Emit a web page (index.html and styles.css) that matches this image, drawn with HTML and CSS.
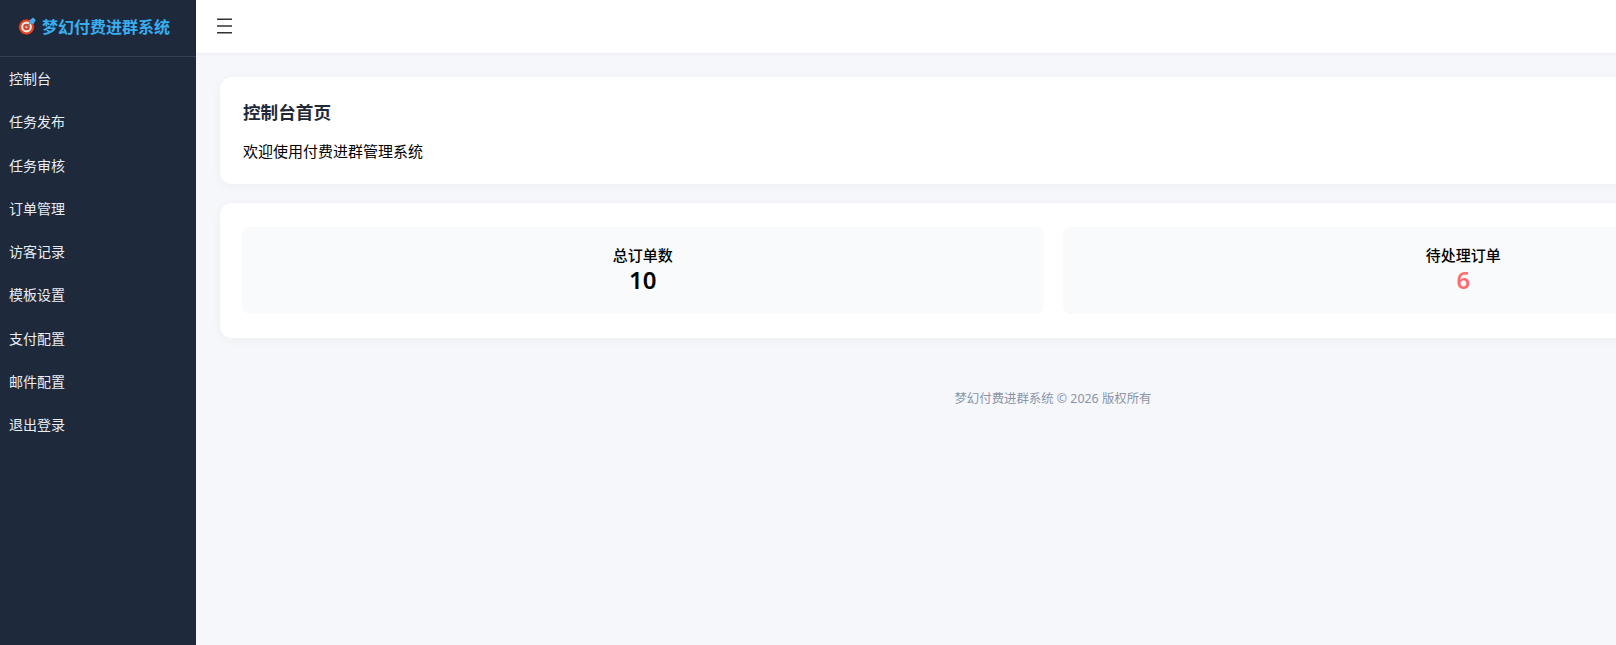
FILE: index.html
```html
<!DOCTYPE html>
<html lang="zh-CN">
<head>
<meta charset="utf-8">
<title>梦幻付费进群系统</title>
<link rel="stylesheet" href="styles.css">
</head>
<body>
<div class="layout">
  <aside class="sidebar">
    <div class="brand">
      <svg class="brand-icon" viewBox="0 0 18 18" width="18" height="18" aria-hidden="true">
        <circle cx="8.5" cy="10" r="7.9" fill="#e0452a" stroke="#3a1c1c" stroke-width=".6"/>
        <circle cx="8.5" cy="10" r="5.4" fill="#f6e9dc"/>
        <circle cx="8.5" cy="10" r="3.3" fill="#dc3f26"/>
        <circle cx="8.5" cy="10" r="1.2" fill="#f6e9dc"/>
        <path d="M8.5 10 13.5 5" stroke="#6d7c88" stroke-width="1.1"/>
        <path d="M11.5 3.5 15 .6 17.8 3 15.5 7 12.2 6.2Z" fill="#45aee8"/>
      </svg>
      <span class="brand-name">梦幻付费进群系统</span>
    </div>
    <nav class="menu">
      <a class="menu-item">控制台</a>
      <a class="menu-item">任务发布</a>
      <a class="menu-item">任务审核</a>
      <a class="menu-item">订单管理</a>
      <a class="menu-item">访客记录</a>
      <a class="menu-item">模板设置</a>
      <a class="menu-item">支付配置</a>
      <a class="menu-item">邮件配置</a>
      <a class="menu-item">退出登录</a>
    </nav>
  </aside>
  <main class="main">
    <header class="topbar">
      <svg class="burger" viewBox="0 0 15 16" width="15" height="16" aria-hidden="true">
        <path d="M0 1.3h15M0 8h15M0 14.7h15" stroke="#333" stroke-width="1.4" fill="none"/>
      </svg>
    </header>
    <div class="content">
      <section class="card intro">
        <h1 class="page-title">控制台首页</h1>
        <p class="welcome">欢迎使用付费进群管理系统</p>
      </section>
      <section class="card stats">
        <div class="stat">
          <div class="stat-label">总订单数</div>
          <div class="stat-value">10</div>
        </div>
        <div class="stat">
          <div class="stat-label">待处理订单</div>
          <div class="stat-value stat-value-alert">6</div>
        </div>
      </section>
      <footer class="footer">梦幻付费进群系统 © 2026 版权所有</footer>
    </div>
  </main>
</div>
</body>
</html>
```
FILE: styles.css
```css
* { box-sizing: border-box; }
html, body { margin: 0; padding: 0; height: 100%; overflow: hidden; }
body {
  font-family: "Noto Sans", "Noto Sans CJK SC", sans-serif;
  background: #f5f7fb;
  color: #000;
}
.layout { display: flex; width: 1910px; min-height: 645px; }
.sidebar {
  flex: 0 0 196px;
  background: #1e293b;
  color: #e8edf5;
  min-height: 645px;
}
.brand {
  display: flex;
  align-items: center;
  gap: 6px;
  height: 57px;
  padding: 0 0 4px 18px;
  border-bottom: 1px solid #334155;
}
.brand-icon { flex: none; }
.brand-name {
  font-size: 16px;
  font-weight: 700;
  color: #38aef0;
  white-space: nowrap;
}
.menu { display: flex; flex-direction: column; }
.menu-item {
  display: block;
  padding: 12px 9px;
  height: 43.3px;
  font-size: 14px;
  line-height: 19px;
  color: #e8edf5;
}
.main { flex: 0 0 1714px; display: flex; flex-direction: column; }
.topbar {
  display: flex;
  align-items: center;
  height: 53px;
  padding: 0 0 1px 21px;
  background: #fff;
  box-shadow: 0 1px 4px rgba(0, 0, 0, .05);
}
.content { padding: 24px; display: flex; flex-direction: column; gap: 19px; }
.card {
  background: #fff;
  border-radius: 12px;
  box-shadow: 0 2px 12px rgba(0, 0, 0, .04);
}
.intro { padding: 23px 24px 23px 23px; }
.page-title {
  margin: 0 0 18px;
  font-size: 17.6px;
  font-weight: 700;
  line-height: 24px;
  color: #1f2937;
}
.welcome { margin: 0; font-size: 15px; line-height: 19px; }
.stats { display: grid; grid-template-columns: 1fr 1fr; gap: 19px; padding: 24px 22px; }
.stat {
  background: #f8fafc;
  border-radius: 8px;
  height: 87px;
  padding-top: 18px;
  display: flex;
  flex-direction: column;
  align-items: center;
  text-align: center;
}
.stat-label { font-size: 15px; line-height: 20px; font-weight: 500; }
.stat-value { font-size: 24px; line-height: 30px; font-weight: 600; }
.stat-value-alert { color: #ff6b6b; }
.footer {
  margin-top: 34px;
  text-align: center;
  font-size: 12.4px;
  line-height: 16px;
  color: #8a94a6;
}
```
